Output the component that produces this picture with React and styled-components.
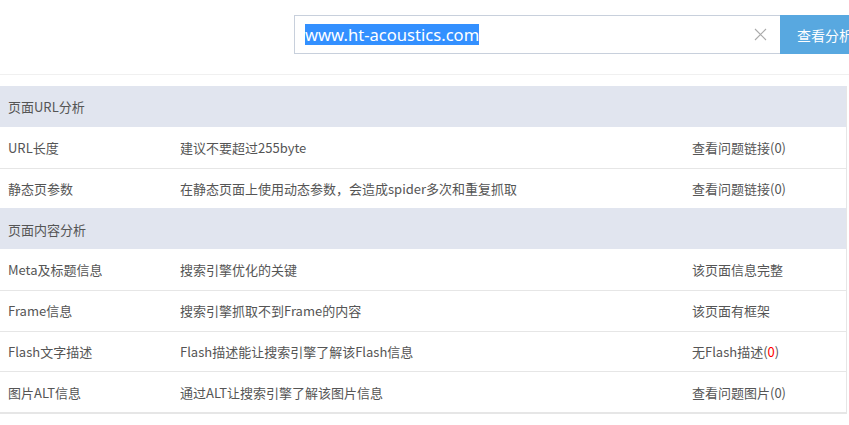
import React from 'react';
import styled, { createGlobalStyle } from 'styled-components';

const GlobalStyle = createGlobalStyle`
  html, body {
    margin: 0;
    padding: 0;
    background: #fff;
  }
  body {
    font-family: "Microsoft YaHei", "Noto Sans CJK SC", "Noto Sans", sans-serif;
    color: #555;
    overflow: hidden;
  }
`;

const Page = styled.div`
  width: 849px;
  height: 425px;
  overflow: hidden;
`;

const TopBar = styled.div`
  height: 75px;
  box-sizing: border-box;
  padding: 15px 0 0 294px;
  border-bottom: 1px solid #f0f0f0;
  display: flex;
  align-items: flex-start;
  overflow: hidden;
`;

const SearchBox = styled.div`
  width: 486px;
  height: 39px;
  flex-shrink: 0;
  box-sizing: border-box;
  border: 1px solid #c8d0dc;
  border-right: none;
  display: flex;
  align-items: center;
  padding-left: 10px;
  position: relative;
`;

const Selected = styled.span`
  background: #3390ff;
  color: #fff;
  font-family: "Microsoft YaHei", "Noto Sans", sans-serif;
  font-size: 16.6px;
  line-height: 21px;
`;

const Clear = styled.span`
  position: absolute;
  right: 13px;
  top: 12px;
  display: flex;
`;

const Button = styled.button`
  width: 100px;
  height: 39px;
  flex-shrink: 0;
  border: none;
  background: #58a8e0;
  color: #fff;
  font-family: inherit;
  font-size: 14px;
  text-align: left;
  padding: 0 0 0 17px;
  white-space: nowrap;
`;

const Table = styled.div`
  margin-top: 11px;
  width: 847px;
  box-sizing: border-box;
  border-right: 1px solid #e6e6e6;
  border-bottom: 2px solid #e6e6e6;
`;

const Row = styled.div`
  display: grid;
  grid-template-columns: 180px 512px 1fr;
  align-items: center;
  height: 40.75px;
  box-sizing: border-box;
  font-size: 13px;
  background: ${p => (p.$head ? '#e1e5ef' : '#fff')};
  border-top: ${p => (p.$first ? 'none' : '1px solid #e6e6e6')};
  border-top-color: ${p => (p.$head || p.$afterHead ? 'transparent' : '#e6e6e6')};
`;

const Cell = styled.div`
  padding-left: ${p => (p.$first ? '8px' : '0')};
  white-space: nowrap;
`;

const Red = styled.span`
  color: #f00;
`;

const CloseIcon = () => (
  <svg width="13" height="13" viewBox="0 0 13 13">
    <path d="M1 1 L12 12 M12 1 L1 12" stroke="#aaa" strokeWidth="1.1" fill="none" />
  </svg>
);

const sections = [
  {
    title: '页面URL分析',
    rows: [
      ['URL长度', '建议不要超过255byte', '查看问题链接(0)'],
      ['静态页参数', '在静态页面上使用动态参数，会造成spider多次和重复抓取', '查看问题链接(0)'],
    ],
  },
  {
    title: '页面内容分析',
    rows: [
      ['Meta及标题信息', '搜索引擎优化的关键', '该页面信息完整'],
      ['Frame信息', '搜索引擎抓取不到Frame的内容', '该页面有框架'],
      ['Flash文字描述', 'Flash描述能让搜索引擎了解该Flash信息', <>无Flash描述(<Red>0</Red>)</>],
      ['图片ALT信息', '通过ALT让搜索引擎了解该图片信息', '查看问题图片(0)'],
    ],
  },
];

const App = () => (
  <Page>
    <GlobalStyle />
    <TopBar>
      <SearchBox>
        <Selected>www.ht-acoustics.com</Selected>
        <Clear>
          <CloseIcon />
        </Clear>
      </SearchBox>
      <Button>查看分析</Button>
    </TopBar>
    <Table>
      {sections.map((s, si) => (
        <React.Fragment key={s.title}>
          <Row $head $first={si === 0}>
            <Cell $first>{s.title}</Cell>
          </Row>
          {s.rows.map((r, ri) => (
            <Row key={ri} $afterHead={ri === 0}>
              <Cell $first>{r[0]}</Cell>
              <Cell>{r[1]}</Cell>
              <Cell>{r[2]}</Cell>
            </Row>
          ))}
        </React.Fragment>
      ))}
    </Table>
  </Page>
);

export default App;
